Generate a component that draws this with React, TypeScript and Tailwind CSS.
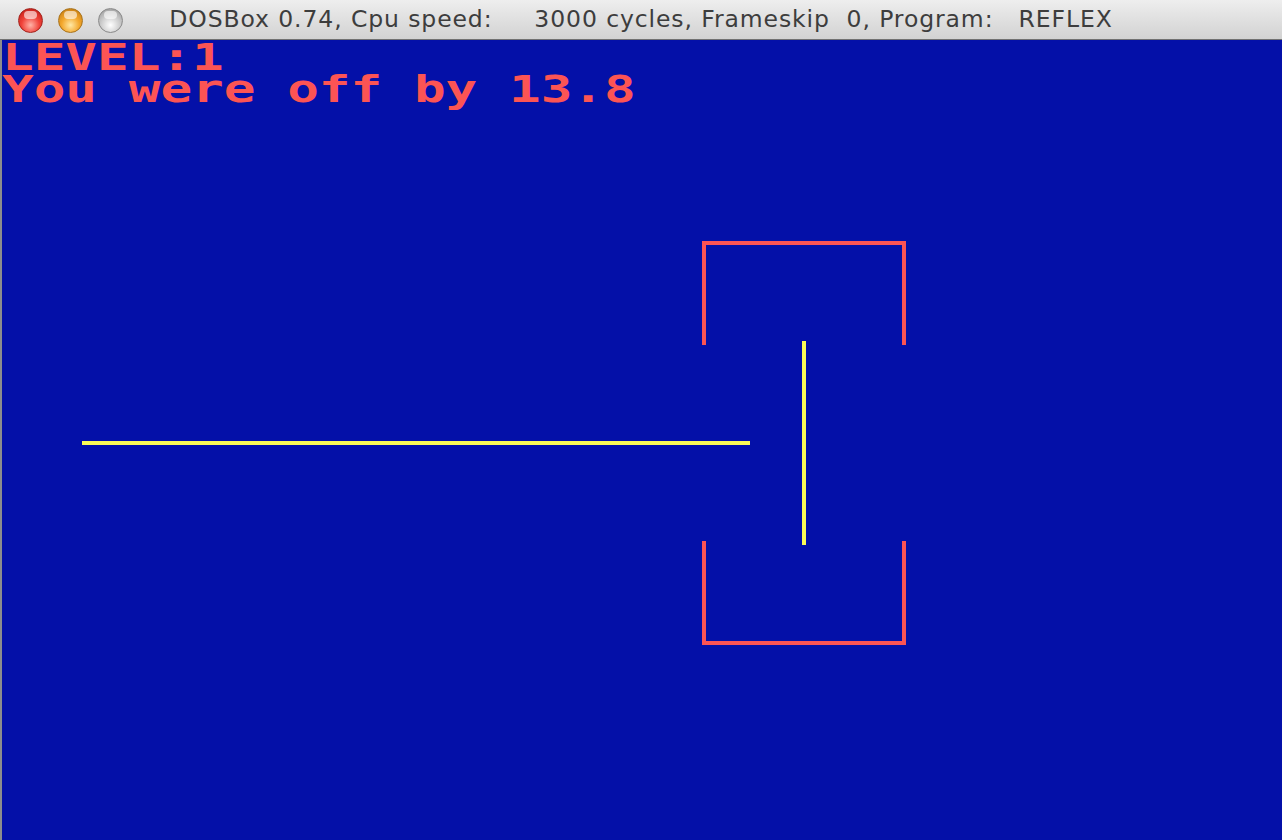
import React from "react";

const title =
  "DOSBox 0.74, Cpu speed:     3000 cycles, Frameskip  0, Program:   REFLEX";

const lines = ["LEVEL:1", "You were off by 13.8"];

function Light({ tone }: { tone: "red" | "amber" | "gray" }) {
  const fill =
    tone === "red"
      ? "bg-[radial-gradient(circle_at_50%_70%,#ffb3a8_0%,#f0433a_45%,#b8120c_100%)] border-[#a3231d]"
      : tone === "amber"
        ? "bg-[radial-gradient(circle_at_50%_70%,#ffe9a6_0%,#f3a72c_45%,#b8700a_100%)] border-[#a9731b]"
        : "bg-[radial-gradient(circle_at_50%_70%,#ffffff_0%,#cfcfcf_45%,#8e8e8e_100%)] border-[#8a8a8a]";
  return (
    <div className={`relative w-[25px] h-[25px] rounded-full border ${fill}`}>
      {/* glossy highlight */}
      <div className="absolute left-[5px] top-[2px] w-[13px] h-[8px] rounded-full bg-white/60" />
    </div>
  );
}

export default function App() {
  return (
    <div className="w-[1282px] h-[840px] flex flex-col overflow-hidden bg-[#0410a8]">
      {/* Title bar */}
      <div className="h-[40px] shrink-0 grid grid-cols-[1fr_auto_1fr] items-center border-b border-[#717171] bg-gradient-to-b from-[#eeeeee] to-[#d2d2d2]">
        <div className="flex items-center gap-[15px] pl-[18px] pt-[1px]">
          <Light tone="red" />
          <Light tone="amber" />
          <Light tone="gray" />
        </div>
        <div className="whitespace-pre text-[23.5px] leading-none text-[#3d3d3d] font-['DejaVu_Sans',sans-serif] tracking-[0.9px]">
          {title}
        </div>
        <div />
      </div>

      {/* Emulator screen */}
      <div className="relative flex-1 border-l-2 border-[#8d8d8d]">
        <div className="flex flex-col pt-[1px] font-['DejaVu_Sans_Mono',monospace] font-bold text-[38px] leading-[32px] text-[#fc5454] whitespace-pre">
          {lines.map((l) => (
            <div key={l} className="h-[32px] origin-left scale-x-[1.385]">
              {l}
            </div>
          ))}
        </div>

        <svg
          className="absolute left-0 top-0"
          width={1280}
          height={800}
          viewBox="0 0 1280 800"
          shapeRendering="crispEdges"
        >
          {/* yellow target lines */}
          <rect x={80} y={401} width={668} height={4} fill="#fbfb56" />
          <rect x={800} y={301} width={4} height={204} fill="#fbfb56" />
          {/* upper red bracket */}
          <rect x={700} y={201} width={204} height={4} fill="#fc5454" />
          <rect x={700} y={201} width={4} height={104} fill="#fc5454" />
          <rect x={900} y={201} width={4} height={104} fill="#fc5454" />
          {/* lower red bracket */}
          <rect x={700} y={501} width={4} height={104} fill="#fc5454" />
          <rect x={900} y={501} width={4} height={104} fill="#fc5454" />
          <rect x={700} y={601} width={204} height={4} fill="#fc5454" />
        </svg>
      </div>
    </div>
  );
}
